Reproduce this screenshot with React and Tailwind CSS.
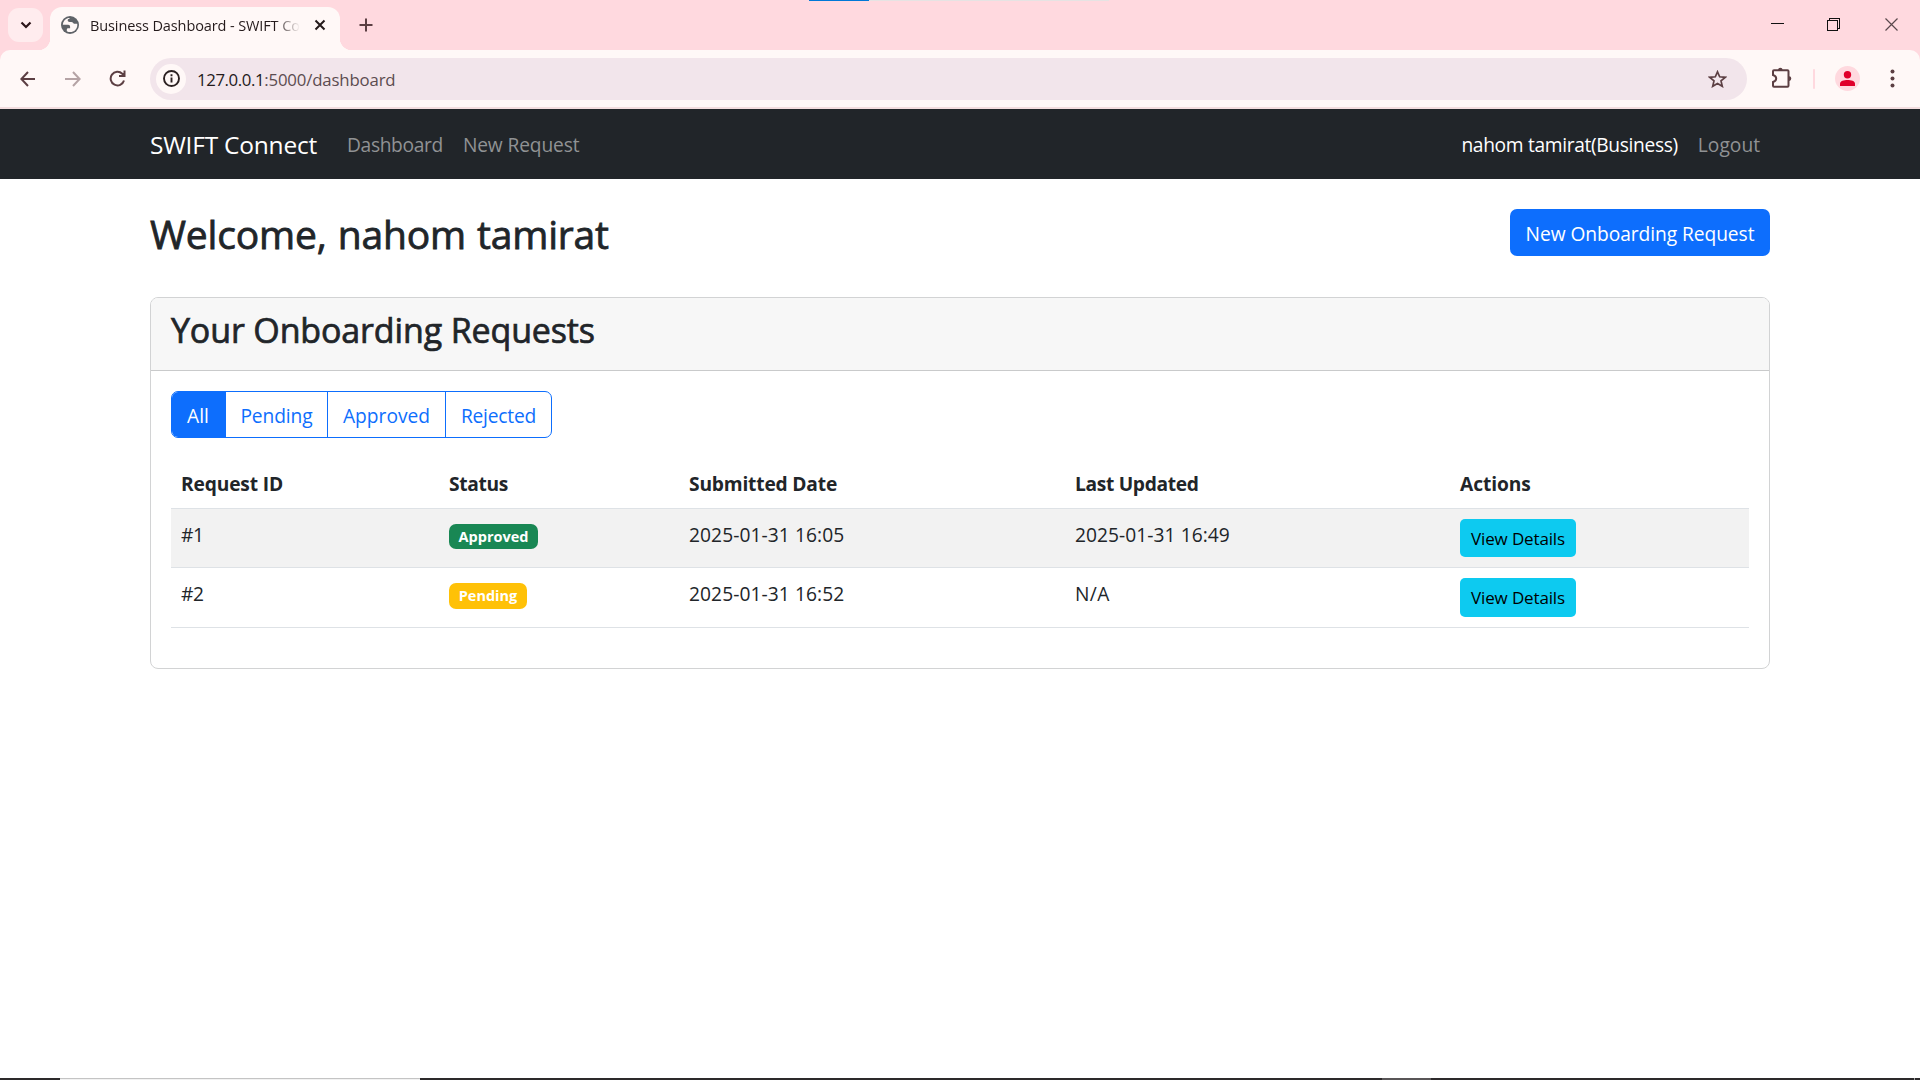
function Chevron() {
  return (
    <svg width="12" height="8" viewBox="0 0 12 8" fill="none" stroke="#2c1518" strokeWidth="2.2"><path d="M1.500 1.500 6 6l4.500-4.500" /></svg>
  );
}

function Globe() {
  return (
    <svg width="18" height="18" viewBox="0 0 18 18">
      <circle cx="9" cy="9" r="9" fill="#5f6368" />
      <path d="M7.200 1.900C4 2.800 2 5.500 1.800 8.800h5.400c1.200 0 1.900.9 1.900 1.800v1.700H7.400c-.9 0-1.600.5-1.600 1.400v1.500c1 .6 2.200.9 3.400.9 4 0 7.100-3.200 7.100-7.100 0-.4 0-.9-.1-1.300h-2.600c-.8 0-1.100-.4-1.600-1-.4-.5-.9-.7-1.700-.7H8.600c-1.100 0-1.900-.7-1.900-1.700 0-.9.6-1.500 1.400-1.600.5-.1.7-.3.7-.8Z" fill="#fff8f7" />
    </svg>
  );
}

function BrowserTabs() {
  return (
    <div className="h-[50px] bg-[#ffd9df] flex relative">
      <div className="absolute left-[809px] top-0 flex h-px w-[300px] bg-[#e6e3e3]"><div className="w-[60px] bg-[#0078d7]" /></div>
      <div className="ml-2 mt-2 w-[35px] h-[34px] rounded-[11px] bg-[#ffecee] flex items-center justify-center"><Chevron /></div>
      <div className="w-[7px] flex items-end"><div className="-ml-[5px] w-3 h-3 shrink-0 bg-[radial-gradient(circle_at_0_0,transparent_12px,#fff8f7_12.5px)]" /></div>
      <div className="mt-[7px] w-[290px] h-[43px] rounded-t-[12px] bg-[#fff8f7] flex items-center pb-[7px]">
        <div className="ml-[11px]"><Globe /></div>
        <div className="ml-[11px] pt-[2px] w-[210px] overflow-hidden whitespace-nowrap text-[14.5px] tracking-[-0.11px] text-[#241a1b] [mask-image:linear-gradient(to_right,black_185px,transparent_210px)]">
          Business Dashboard - SWIFT Connect
        </div>
        <svg className="ml-[14px]" width="12" height="12" viewBox="0 0 12 12" stroke="#241a1b" strokeWidth="2"><path d="m1.500 1.500 9 9m0-9-9 9" /></svg>
      </div>
      <div className="w-3 flex items-end"><div className="w-3 h-3 bg-[radial-gradient(circle_at_100%_0,transparent_12px,#fff8f7_12.5px)]" /></div>
      <svg className="ml-[7px] mt-[18px]" width="14" height="14" viewBox="0 0 14 14" stroke="#5c3f43" strokeWidth="2"><path d="M7 .5v13M.5 7h13" /></svg>
      <div className="ml-auto mr-[21px] mt-[18px] h-[14px]">
        <svg width="128" height="14" viewBox="0 0 128 14" fill="none" stroke="#111" shapeRendering="crispEdges">
          <path d="M0 5.500h13M56.500 2.500h10v10h-10zM58.500 2.500v-2h10v10h-2" />
          <path d="m114.500.5 12 12m0-12-12 12" stroke="#5a484c" shapeRendering="auto" strokeWidth="1.200" />
        </svg>
      </div>
    </div>
  );
}

function Toolbar() {
  return (
    <div className="bg-[#ffd9df]">
      <div className="h-[59px] rounded-t-[10px] bg-[#fff8f7] border-b-2 border-[#f3dddf] flex items-center">
        <svg className="ml-5" width="16" height="16" viewBox="0 0 16 16" fill="none" stroke="#5c3f43" strokeWidth="2"><path d="M15 8H2M8 1 1.400 8 8 15" /></svg>
        <svg className="ml-[29px]" width="16" height="16" viewBox="0 0 16 16" fill="none" stroke="#b5a3a5" strokeWidth="2"><path d="M0 8h14M8 1l6.600 7L8 15" /></svg>
        <svg className="ml-[28px]" width="17" height="17" viewBox="0 0 17 17" fill="none" stroke="#5c3f43" strokeWidth="2"><path d="M15 10.500A6.800 6.800 0 1 1 13.300 3.800L15.500 6M15.500.5V6H10" /></svg>
        <div className="ml-6 w-[1597px] h-[42px] rounded-full bg-[#f2e5eb] flex items-center">
          <div className="ml-[6px] w-[30px] h-[30px] rounded-full bg-[#fff8f7] flex items-center justify-center">
            <svg width="17" height="17" viewBox="0 0 17 17" fill="none" stroke="#2b2021" strokeWidth="1.900"><circle cx="8.500" cy="8.500" r="7.500" /><path d="M8.500 7.500v5M8.500 4.300v2" /></svg>
          </div>
          <div className="ml-[11px] pt-[2px] text-[16.8px] flex text-[#5c4c50]"><span className="tracking-[-0.4px] text-[#241a1b]">127.0.0.1</span><span className="tracking-[-0.16px]">:5000/dashboard</span></div>
          <svg className="ml-auto mr-5" width="19" height="18" viewBox="0 0 19 18" fill="none" stroke="#5c3f43" strokeWidth="1.700"><path d="m9.500 1.800 2.200 5 5.500.5-4.200 3.600 1.300 5.400-4.800-2.900-4.800 2.900L6 10.900 1.800 7.300l5.500-.5Z" /></svg>
        </div>
        <svg className="ml-[24px] -mt-[2px]" width="21" height="21" viewBox="0 0 21 21" fill="none" stroke="#5c3f43" strokeWidth="2"><path d="M2 4.300q0-1 1-1h13.500q1 0 1 1v14.500q0 1-1 1H3q-1 0-1-1V15q3.200-1 3.200-3.500T2 8Z" /><path d="M7 3a2.300 2.300 0 0 1 4.600 0ZM18 9.300a2.300 2.300 0 0 1 0 4.600Z" fill="#5c3f43" stroke="none" /></svg>
        <div className="ml-[21px] w-[2px] h-5 rounded bg-[#ffd9df]" />
        <div className="ml-5 w-[25px] h-[25px] rounded-full bg-[#ffd9df] flex items-center justify-center">
          <svg width="15" height="15" viewBox="0 0 15 15" fill="#e0002b"><circle cx="7.500" cy="3.700" r="3.700" /><path d="M0 15v-2.200C0 10 4 9 7.500 9s7.500 1 7.500 3.800V15Z" /></svg>
        </div>
        <svg className="ml-[30px]" width="5" height="19" viewBox="0 0 5 19" fill="#5c3f43"><circle cx="2.500" cy="2.500" r="2" /><circle cx="2.500" cy="9.500" r="2" /><circle cx="2.500" cy="16.500" r="2" /></svg>
      </div>
    </div>
  );
}

function Navbar() {
  return (
    <nav className="h-[70px] bg-[#212529] px-[150px] pt-[2px] flex items-center text-[19.2px] text-[#909294] whitespace-nowrap">
      <a className="text-white text-[24.5px] tracking-[-0.22px]">SWIFT Connect</a>
      <a className="ml-[30px] tracking-[-0.35px]">Dashboard</a>
      <a className="ml-[20px] tracking-[-0.12px]">New Request</a>
      <span className="ml-auto text-white tracking-[-0.34px]">nahom tamirat(Business)</span>
      <a className="ml-5 mr-[10px]">Logout</a>
    </nav>
  );
}

const rows = [
  ["#1", "Approved", "2025-01-31 16:05", "2025-01-31 16:49"],
  ["#2", "Pending", "2025-01-31 16:52", "N/A"],
];

function Table() {
  return (
    <div className="mt-5 text-[19.2px] whitespace-nowrap">
      <div className="grid grid-cols-[268px_240px_386px_385px_299px] h-[51px] px-[10px] pt-[2px] font-bold border-b border-[#dee2e6] items-center">
        <span className="tracking-[-0.15px]">Request ID</span>
        <span className="tracking-[-0.35px]">Status</span>
        <span className="tracking-[-0.18px]">Submitted Date</span>
        <span className="tracking-[-0.32px]">Last Updated</span>
        <span className="tracking-[-0.08px]">Actions</span>
      </div>
      {rows.map(([id, status, submitted, updated], i) => (
        <div key={id} className={`grid grid-cols-[268px_240px_386px_385px_299px] px-[10px] pt-[10px] border-b border-[#dee2e6] leading-[32px] ${i ? "h-[60px]" : "h-[59px] bg-[#f2f2f2]"}`}>
          <span className="tracking-[-0.3px]">{id}</span>
          <div className={`mt-[5px] rounded-[7px] text-white text-[14.5px] font-bold flex items-center justify-center ${i ? "h-[26px] w-[78px] bg-[#ffc107]" : "h-[25px] w-[89px] bg-[#198754]"}`}>{status}</div>
          <span className="tracking-[0.08px]">{submitted}</span>
          <span className={i ? "tracking-[0.4px]" : "tracking-[0.05px]"}>{updated}</span>
          <button className={`w-[116px] bg-[#0dcaf0] rounded-[5px] text-black text-[17px] tracking-[-0.14px] flex items-center justify-center ${i ? "h-[39px]" : "h-[38px] pt-[2px]"}`}>View Details</button>
        </div>
      ))}
    </div>
  );
}

export default function App() {
  return (
    <div className="w-[1920px] h-[1080px] bg-white overflow-hidden flex flex-col text-[#212529] font-['Open_Sans','Noto_Sans',sans-serif]">
      <BrowserTabs />
      <Toolbar />
      <Navbar />
      <main className="flex-1 px-[150px] pt-[30px]">
        <div className="flex justify-between h-[88px]">
          <h1 className="text-[39px] leading-[50px] tracking-[-0.16px] [word-spacing:1px] [-webkit-text-stroke:0.8px_#212529]">Welcome, nahom tamirat</h1>
          <button className="w-[260px] h-[47px] pt-[3px] bg-[#0d6efd] text-white rounded-[7px] text-[19.2px] tracking-[-0.06px]">New Onboarding Request</button>
        </div>
        <section className="h-[372px] border border-[#d2d3d4] rounded-[8px] overflow-hidden">
          <div className="h-[73px] px-5 pt-[10px] bg-[#f7f7f7] border-b border-[#c9cacb]">
            <h2 className="text-[34px] leading-[44px] tracking-[-0.14px] [-webkit-text-stroke:0.7px_#212529]">Your Onboarding Requests</h2>
          </div>
          <div className="px-5 pt-5">
            <div className="flex w-[381px] h-[47px] border border-[#0d6efd] rounded-[7px] overflow-hidden text-[19.2px] text-[#0d6efd]">
              <button className="pt-[3px] pr-[2px] w-[54px] bg-[#0d6efd] text-white">All</button>
              <button className="pt-[3px] w-[102px] border-r border-[#0d6efd] tracking-[-0.1px]">Pending</button>
              <button className="pt-[3px] w-[118px] border-r border-[#0d6efd]">Approved</button>
              <button className="pt-[3px] w-[105px] tracking-[-0.2px]">Rejected</button>
            </div>
            <Table />
          </div>
        </section>
      </main>
      <footer className="h-[2px] flex shrink-0 bg-[#2d2a2b]">
        <div className="ml-[60px] w-[360px] bg-[#f2f2f2] border-t border-[#c4c4c4]" />
        <div className="ml-[962px] w-[49px] bg-[#595657]" />
        <div className="ml-auto mr-[5px] w-px bg-[#a0a0a0]" />
      </footer>
    </div>
  );
}
